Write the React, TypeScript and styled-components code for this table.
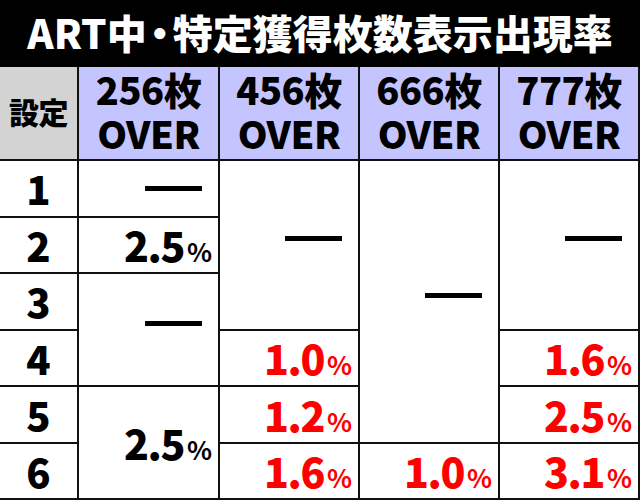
import React from "react";
import styled, {createGlobalStyle} from "styled-components";

const GlobalStyle = createGlobalStyle`
html, body {
margin: 0;
padding: 0;
background: #fff;
}
body {
font-family: "Noto Sans CJK JP", "Noto Sans", sans-serif;
}
`

const Page = styled.div`
width: 640px;
height: 500px;
display: flex;
flex-direction: column;
overflow: hidden;
`

const TitleBar = styled.div`
height: 67px;
flex-shrink: 0;
background: #000;
color: #fff;
display: flex;
align-items: center;
justify-content: center;
font-size: 40px;
font-weight: 900;
line-height: 1;
letter-spacing: 0;
padding-bottom: 4px;
box-sizing: border-box;
`

const Dot = styled.span`
margin: 0 -7px;
`

const Grid = styled.div`
flex: 1;
min-height: 0;
display: grid;
grid-template-columns: 77px 139px 138px 138px 138px;
grid-template-rows: 92px repeat(6, minmax(0, 1fr));
gap: 2px;
padding: 0 2px 2px 0;
background: #111;
`

const Cell = styled.div<{ $col: number, $row: number, $span?: number }>`
grid-column: ${({$col}) => $col};
grid-row: ${({$row, $span}) => `${$row} / span ${$span || 1}`};
background: #fff;
display: flex;
align-items: center;
line-height: 1;
min-height: 0;
`

const HeadCell = styled(Cell)<{ $gray?: boolean }>`
background: ${({$gray}) => $gray ? '#d3d3d3' : '#c4c4ff'};
flex-direction: column;
justify-content: center;
gap: 6px;
font-weight: 900;
font-size: ${({$gray}) => $gray ? '30px' : '38px'};
letter-spacing: -0.5px;
color: #000;
padding-bottom: 5px;
box-sizing: border-box;
`

const HeadLine = styled.span`
display: block;
line-height: 38px;
`

const LabelCell = styled(Cell)`
justify-content: center;
font-size: 40px;
font-weight: 900;
`

const ValueCell = styled(Cell)`
justify-content: flex-end;
padding-right: 6px;
`

const Num = styled.span<{ $red?: boolean }>`
color: ${({$red}) => $red ? '#ff0000' : '#000'};
font-size: 41px;
font-weight: 900;
letter-spacing: -1.5px;
`

const Pct = styled.span`
font-size: 26px;
font-weight: 700;
letter-spacing: 0;
margin-left: 3px;
`

const Dash = styled.span<{ $lift?: boolean }>`
display: block;
width: 57px;
height: 5px;
background: #000;
margin-right: 10px;
margin-bottom: ${({$lift}) => $lift ? '12px' : '0'};
`

type Val = { col: number, row: number, span?: number, v?: string, red?: boolean }

const values: Val[] = [
    {col: 2, row: 2},
    {col: 2, row: 3, v: '2.5'},
    {col: 2, row: 4, span: 2},
    {col: 2, row: 6, span: 2, v: '2.5'},
    {col: 3, row: 2, span: 3},
    {col: 3, row: 5, v: '1.0', red: true},
    {col: 3, row: 6, v: '1.2', red: true},
    {col: 3, row: 7, v: '1.6', red: true},
    {col: 4, row: 2, span: 5},
    {col: 4, row: 7, v: '1.0', red: true},
    {col: 5, row: 2, span: 3},
    {col: 5, row: 5, v: '1.6', red: true},
    {col: 5, row: 6, v: '2.5', red: true},
    {col: 5, row: 7, v: '3.1', red: true},
]

const heads = ['256', '456', '666', '777']

const App = () => {
    return <Page>
        <GlobalStyle/>
        <TitleBar>ART中<Dot>・</Dot>特定獲得枚数表示出現率</TitleBar>
        <Grid>
            <HeadCell $col={1} $row={1} $gray>設定</HeadCell>
            {heads.map((h, i) => <HeadCell key={h} $col={i + 2} $row={1}>
                <HeadLine>{h}枚</HeadLine>
                <HeadLine>OVER</HeadLine>
            </HeadCell>)}
            {[1, 2, 3, 4, 5, 6].map(n => <LabelCell key={n} $col={1} $row={n + 1}>{n}</LabelCell>)}
            {values.map((c, key) => <ValueCell key={key} $col={c.col} $row={c.row} $span={c.span}>
                {c.v
                    ? <Num $red={c.red}>{c.v}<Pct>%</Pct></Num>
                    : <Dash $lift={!!c.span && c.span > 1}/>}
            </ValueCell>)}
        </Grid>
    </Page>
}

export default App
